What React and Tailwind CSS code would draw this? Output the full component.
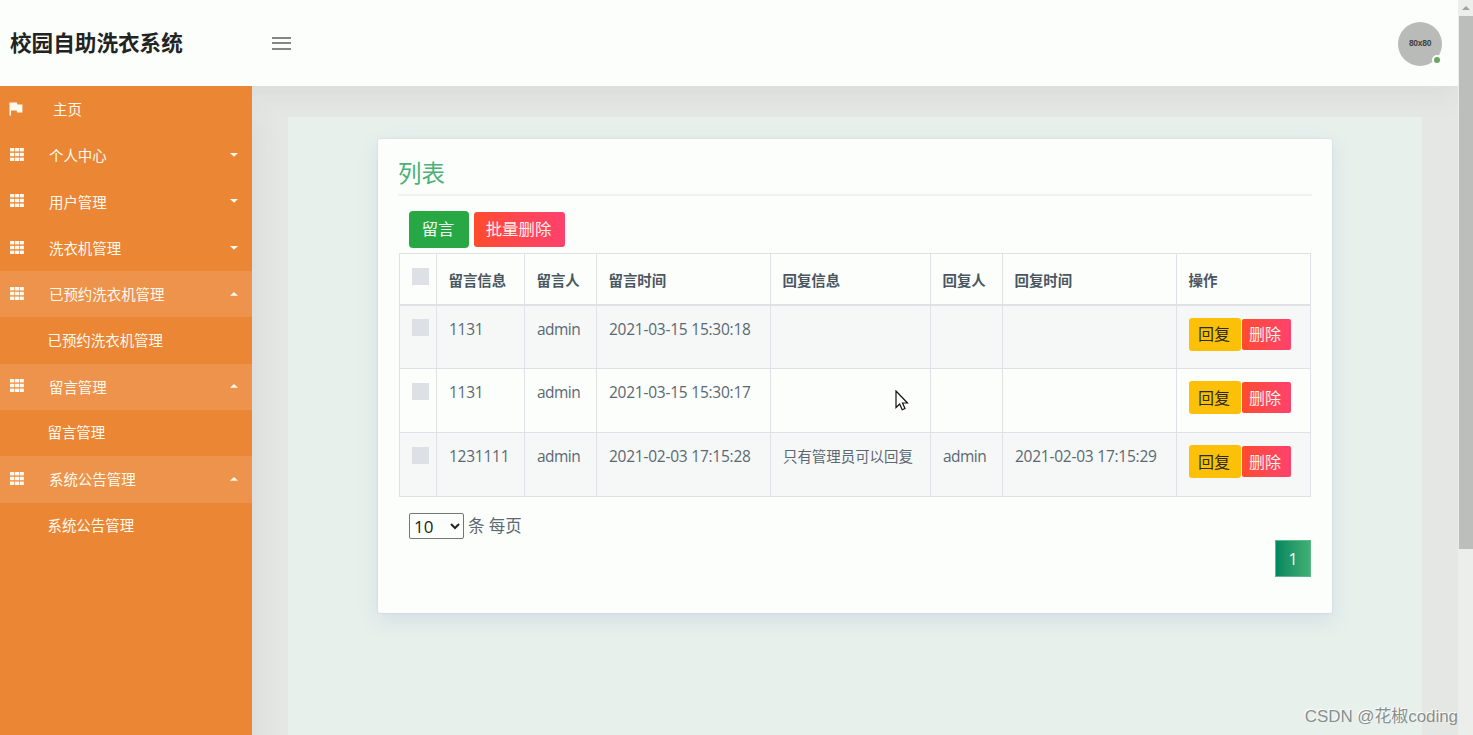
import { useState } from 'react';
import clsx from 'clsx';

const menus = [
  { name: '个人中心', children: [] },
  { name: '用户管理', children: [] },
  { name: '洗衣机管理', children: [] },
  { name: '已预约洗衣机管理', children: ['已预约洗衣机管理'] },
  { name: '留言管理', children: ['留言管理'] },
  { name: '系统公告管理', children: ['系统公告管理'] },
];

const columns = ['留言信息', '留言人', '留言时间', '回复信息', '回复人', '回复时间', '操作'];

const messages = [
  { info: '1131', user: 'admin', time: '2021-03-15 15:30:18', reply: '', replier: '', replyTime: '' },
  { info: '1131', user: 'admin', time: '2021-03-15 15:30:17', reply: '', replier: '', replyTime: '' },
  { info: '1231111', user: 'admin', time: '2021-02-03 17:15:28', reply: '只有管理员可以回复', replier: 'admin', replyTime: '2021-02-03 17:15:29' },
];

function GridIcon() {
  return (
    <svg width="14" height="13" viewBox="0 0 14 13" fill="currentColor" className="shrink-0">
      {[0, 4.8, 9.6].map((y) => [0, 4.85, 9.7].map((x) => <rect key={`${x}-${y}`} x={x} y={y} width="4.2" height="3.4" />))}
    </svg>
  );
}

function Caret({ up }) {
  return (
    <svg width="8" height="4" viewBox="0 0 8 4" fill="currentColor" className="mr-[14px] -mt-[1px] ml-auto shrink-0">
      <path d={up ? 'M0 3.8 4 0l4 3.800z' : 'M0 0h8L4 3.800z'} />
    </svg>
  );
}

function Header() {
  return (
    <header className="relative z-10 flex h-[86px] shrink-0 items-center bg-[#fcfefb] shadow-[0_8px_30px_rgba(60,70,60,0.07)]">
      <h1 className="w-[272px] pl-[10px] text-[21.6px] leading-8 font-bold text-[#222423]">校园自助洗衣系统</h1>
      <button aria-label="menu" className="flex h-[13px] w-[19px] flex-col justify-between">
        <span className="h-[2px] w-full bg-[#858785]" />
        <span className="h-[2px] w-full bg-[#858785]" />
        <span className="h-[2px] w-full bg-[#858785]" />
      </button>
      <div className="relative mt-px mr-4 ml-auto flex size-11 items-center justify-center rounded-full bg-[#b9bbb8]">
        <span className="font-['Liberation_Sans'] text-[8.5px] font-bold tracking-[-0.3px] text-[#3f413f]">80x80</span>
        <span className="absolute right-0 bottom-[1px] size-[10px] rounded-full border-2 border-[#fcfefb] bg-[#6aa662]" />
      </div>
    </header>
  );
}

function Sidebar() {
  return (
    <nav className="relative z-20 w-[252px] shrink-0 bg-[#eb8635] text-[14.45px] text-[#fffaf0] shadow-[8px_30px_26px_rgba(60,70,60,0.06)]">
      <a className="flex h-[46.3px] items-center pl-[9px]">
        <svg width="14" height="14" viewBox="0 0 14 14" fill="currentColor" className="-mt-[1px] shrink-0">
          <path d="M0.5 0.5h7.4l.5 1.9h5v8H8.2l-.6-1.9H2v5H.5z" />
        </svg>
        <span className="mt-[2px] ml-[30px]">主页</span>
      </a>
      {menus.map((menu) => (
        <div key={menu.name}>
          <a className={clsx('flex h-[46.3px] items-center pl-[9.5px]', menu.children.length > 0 && 'bg-[#ed934b]')}>
            <span className="-mt-[2px]"><GridIcon /></span>
            <span className="mt-[1.5px] ml-[25.5px]">{menu.name}</span>
            <Caret up={menu.children.length > 0} />
          </a>
          {menu.children.map((child) => (
            <a key={child} className="flex h-[46.3px] items-center pl-[47.5px]">{child}</a>
          ))}
        </div>
      ))}
    </nav>
  );
}

function Check() {
  return <span className="block h-[17px] w-[17px] bg-[#dde1e5]" />;
}

function MessageTable() {
  return (
    <table className="w-[912px] table-fixed border-collapse text-[15.5px] tracking-[-0.24px] text-[#5a6873]">
      <colgroup>
        <col className="w-[37px]" />
        <col className="w-[88px]" />
        <col className="w-[72px]" />
        <col className="w-[174px]" />
        <col className="w-[160px]" />
        <col className="w-[72px]" />
        <col className="w-[174px]" />
        <col />
      </colgroup>
      <thead>
        <tr className="h-[51px] text-left text-[14.45px] tracking-normal text-[#4a5762]">
          <th className="border border-b-2 border-[#dee2e6] pt-[14px] pl-3 align-top"><Check /></th>
          {columns.map((col) => (
            <th key={col} className="border border-b-2 border-[#dee2e6] pt-[5px] pl-[11.5px] font-bold">{col}</th>
          ))}
        </tr>
      </thead>
      <tbody>
        {messages.map((m, i) => (
          <tr key={i} className="h-16 odd:bg-[#f6f8f8] [&>td]:border [&>td]:border-[#dee2e6] [&>td]:pt-[12px] [&>td]:pl-3 [&>td]:align-top [&>td]:leading-[22px] [&>td]:whitespace-nowrap">
            <td><span className="block pt-[1.500px]"><Check /></span></td>
            <td>{m.info}</td>
            <td className="tracking-[-0.55px]">{m.user}</td>
            <td>{m.time}</td>
            <td className="text-[14.45px] tracking-normal"><span className="block pt-px">{m.reply}</span></td>
            <td className="tracking-[-0.55px]">{m.replier}</td>
            <td>{m.replyTime}</td>
            <td>
              <div className="flex items-center text-base tracking-normal">
                <button className="h-[33px] w-[52px] rounded-[3px] bg-[#fcc008] pr-[2px] text-[#2a2c26]">回复</button>
                <button className="ml-px h-[31px] w-[49px] rounded-[2px] bg-linear-to-r from-[#ff4b2b] to-[#ff416c] pr-[3px] text-[#fff0ec]">删除</button>
              </div>
            </td>
          </tr>
        ))}
      </tbody>
    </table>
  );
}

function Cursor() {
  return (
    <svg width="14" height="21" viewBox="0 0 14 21" className="absolute top-[390px] left-[895px] z-30">
      <path d="M1 1v16.5l3.7-3.5 2.5 5.7 2.8-1.2-2.5-5.5h5z" fill="#fff" stroke="#111" strokeWidth="1.2" />
    </svg>
  );
}

export default function App() {
  const [pageSize, setPageSize] = useState('10');

  return (
    <div className="relative flex h-screen w-full overflow-hidden bg-[#e5e7e4] font-['Open_Sans','Noto_Sans_CJK_SC',sans-serif]">
      <div className="flex min-w-0 flex-1 flex-col">
        <Header />
        <div className="flex min-h-0 flex-1">
          <Sidebar />
          <main className="flex-1 pt-[31px] pr-[37px] pl-9">
            <div className="relative z-20 h-full bg-[#e7f0eb] px-[90px] pt-[22px]">
              <section className="h-[474px] w-[954px] rounded-[2px] bg-[#fcfefb] px-5 shadow-[0_7px_20px_rgba(140,160,210,0.22),0_0_2px_rgba(140,160,200,0.3)]">
                <h2 className="h-[57px] border-b-2 border-[#f0f2f1] pt-[17px] text-[23.5px] leading-[34px] text-[#4bb077]">列表</h2>
                <div className="flex h-[57px] items-center pt-[9px] pl-[11px] text-base text-[#effbf0]">
                  <button className="h-[37px] w-[60px] rounded-[4px] bg-[#28a745] pr-[2px] text-[16.3px]">留言</button>
                  <button className="ml-[5px] h-[35px] w-[91px] rounded-[3px] bg-linear-to-r from-[#ff4b2b] to-[#ff416c] pr-[2px] text-[16.4px] text-[#fff0ec]">批量删除</button>
                </div>
                <div className="ml-px">
                  <MessageTable />
                </div>
                <div className="mt-[16px] flex h-[26px] items-center pl-[11px] text-base text-[#5c6874]">
                  <select
                    value={pageSize}
                    onChange={(e) => setPageSize(e.target.value)}
                    className="h-[26px] w-[55px] rounded-[2px] border border-[#767676] bg-[#fcfefb] text-[17px] leading-5 text-[#222]"
                  >
                    <option>10</option>
                    <option>25</option>
                    <option>50</option>
                  </select>
                  <span className="mt-px ml-[4px] text-[16.5px]">条 每页</span>
                </div>
                <div className="mt-px flex justify-end pr-[1px]">
                  <button className="h-[37px] w-[36px] border border-[#5fb78c] bg-linear-to-r from-[#00875f] to-[#3fb073] text-base text-[#f4fff8]">1</button>
                </div>
              </section>
            </div>
          </main>
        </div>
      </div>
      <div className="z-20 flex w-[15px] shrink-0 flex-col items-end bg-[#eceeeb]">
        <div className="flex h-4 w-[14px] items-center justify-center">
          <svg width="8" height="4" viewBox="0 0 8 4" fill="#a0a2a0"><path d="M0 4 4 0l4 4z" /></svg>
        </div>
        <div className="h-[533px] w-[14px] bg-[#bcbebb]" />
      </div>
      <Cursor />
      <div className="absolute right-[15px] bottom-[6px] z-30 font-['Liberation_Sans','Noto_Sans_CJK_SC',sans-serif] text-[16.9px] leading-6 whitespace-nowrap text-[#8b8e8c] [text-shadow:-1px_-1px_0_#fff]">CSDN @花椒coding</div>
    </div>
  );
}
